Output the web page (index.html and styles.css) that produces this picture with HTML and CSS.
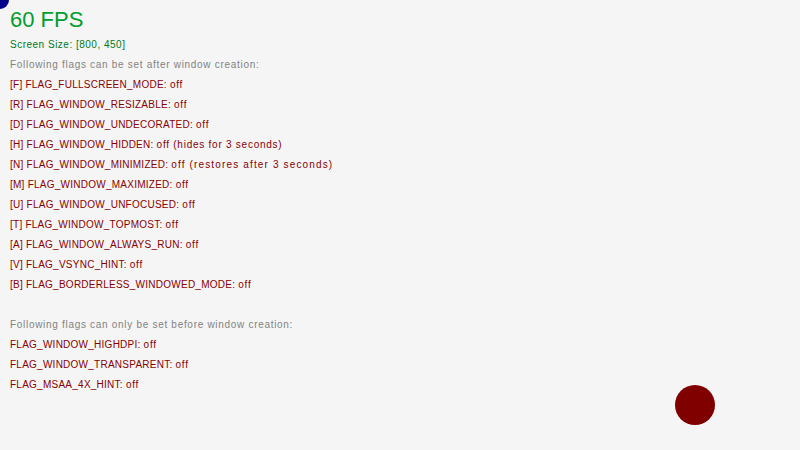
FILE: index.html
```html
<!DOCTYPE html>
<html>
<head>
<meta charset="utf-8">
<link rel="stylesheet" href="styles.css">
</head>
<body>
<div class="screen">
  <div class="cursor"></div>
  <div class="fps">60 FPS</div>
  <div class="lines">
    <div class="line size">Screen Size: [800, 450]</div>
    <div class="line note">Following flags can be set after window creation:</div>
    <div class="line flag">[F] FLAG_FULLSCREEN_MODE: <span class="val">off</span></div>
    <div class="line flag">[R] FLAG_WINDOW_RESIZABLE: <span class="val">off</span></div>
    <div class="line flag">[D] FLAG_WINDOW_UNDECORATED: <span class="val">off</span></div>
    <div class="line flag">[H] FLAG_WINDOW_HIDDEN: <span class="val">off (hides for 3 seconds)</span></div>
    <div class="line flag">[N] FLAG_WINDOW_MINIMIZED: <span class="val wide">off (restores after 3 seconds)</span></div>
    <div class="line flag">[M] FLAG_WINDOW_MAXIMIZED: <span class="val">off</span></div>
    <div class="line flag">[U] FLAG_WINDOW_UNFOCUSED: <span class="val">off</span></div>
    <div class="line flag">[T] FLAG_WINDOW_TOPMOST: <span class="val">off</span></div>
    <div class="line flag">[A] FLAG_WINDOW_ALWAYS_RUN: <span class="val">off</span></div>
    <div class="line flag">[V] FLAG_VSYNC_HINT: <span class="val">off</span></div>
    <div class="line flag">[B] FLAG_BORDERLESS_WINDOWED_MODE: <span class="val">off</span></div>
    <div class="line blank"></div>
    <div class="line note">Following flags can only be set before window creation:</div>
    <div class="line flag">FLAG_WINDOW_HIGHDPI: <span class="val">off</span></div>
    <div class="line flag">FLAG_WINDOW_TRANSPARENT: <span class="val">off</span></div>
    <div class="line flag">FLAG_MSAA_4X_HINT: <span class="val">off</span></div>
  </div>
  <div class="ball"></div>
</div>
</body>
</html>
```
FILE: styles.css
```css
html, body {
  margin: 0;
  padding: 0;
  background: #f5f5f5;
}
.screen {
  position: relative;
  width: 800px;
  height: 450px;
  overflow: hidden;
  background: #f5f5f5;
  font-family: "Liberation Sans", Arial, sans-serif;
  padding: 10px 0 0 10px;
  box-sizing: border-box;
}
.fps {
  font-size: 22px;
  line-height: 20px;
  height: 20px;
  color: #009e2f;
  margin-bottom: 10px;
}
.lines {
  display: flex;
  flex-direction: column;
  gap: 10px;
}
.line {
  font-size: 10px;
  line-height: 10px;
  height: 10px;
  white-space: nowrap;
}
.size {
  color: #007a1c;
  letter-spacing: 0.5px;
}
.note {
  color: #828282;
  letter-spacing: 0.7px;
}
.flag {
  color: #880000;
  letter-spacing: 0.25px;
}
.val {
  letter-spacing: 0.75px;
}
.val.wide {
  letter-spacing: 1.15px;
}
.cursor {
  position: absolute;
  left: -9px;
  top: -9px;
  width: 18px;
  height: 18px;
  border-radius: 50%;
  background: #00008b;
}
.ball {
  position: absolute;
  left: 675px;
  top: 385px;
  width: 40px;
  height: 40px;
  border-radius: 50%;
  background: #800000;
}
```
